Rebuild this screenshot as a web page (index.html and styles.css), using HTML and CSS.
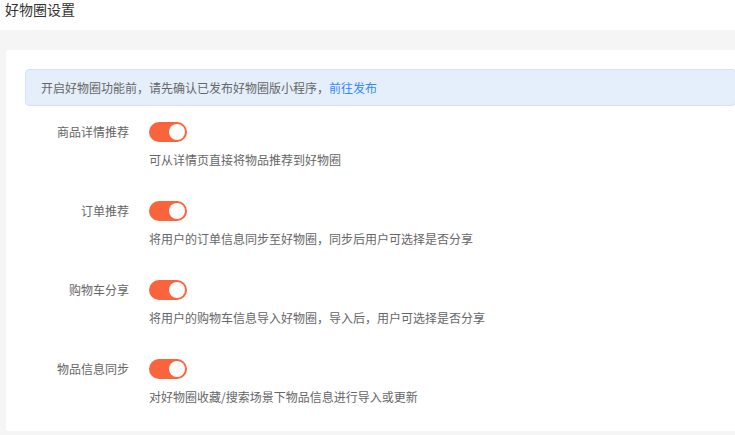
FILE: index.html
```html
<!DOCTYPE html>
<html lang="zh-CN">
  <head>
    <meta charset="UTF-8" />
    <meta name="viewport" content="width=device-width, initial-scale=1.0" />
    <title>好物圈设置</title>
    <link rel="stylesheet" href="styles.css">
  </head>
  <body>
    <h1 class="page-title">好物圈设置</h1>
    <div class="page-body">
      <div class="card">
        <div class="notice">
          开启好物圈功能前，请先确认已发布好物圈版小程序，<a href="#" class="notice-link">前往发布</a>
        </div>

        <div class="setting">
          <div class="setting-label">商品详情推荐</div>
          <div class="setting-control">
            <span class="switch switch-on"><span class="switch-knob"></span></span>
            <p class="setting-desc">可从详情页直接将物品推荐到好物圈</p>
          </div>
        </div>

        <div class="setting">
          <div class="setting-label">订单推荐</div>
          <div class="setting-control">
            <span class="switch switch-on"><span class="switch-knob"></span></span>
            <p class="setting-desc">将用户的订单信息同步至好物圈，同步后用户可选择是否分享</p>
          </div>
        </div>

        <div class="setting">
          <div class="setting-label">购物车分享</div>
          <div class="setting-control">
            <span class="switch switch-on"><span class="switch-knob"></span></span>
            <p class="setting-desc">将用户的购物车信息导入好物圈，导入后，用户可选择是否分享</p>
          </div>
        </div>

        <div class="setting">
          <div class="setting-label">物品信息同步</div>
          <div class="setting-control">
            <span class="switch switch-on"><span class="switch-knob"></span></span>
            <p class="setting-desc">对好物圈收藏/搜索场景下物品信息进行导入或更新</p>
          </div>
        </div>
      </div>
    </div>
  </body>
</html>
```

FILE: styles.css
```css
* {
  margin: 0;
  padding: 0;
  box-sizing: border-box;
}

body {
  font-family: "Noto Sans CJK SC", "Liberation Sans", sans-serif;
  font-size: 12px;
  color: #666;
  background-color: #f5f5f5;
  overflow: hidden;
}

/* header */
.page-title {
  height: 30px;
  padding: 2px 5px 0 5px;
  font-size: 14px;
  font-weight: normal;
  line-height: 14px;
  color: #333;
  background-color: #fff;
}

/* content */
.page-body {
  padding: 20px 0 0 6px;
}

.card {
  margin-right: -20px;
  padding: 19px 19px 25px 19px;
  background-color: #fff;
  border-radius: 2px;
}

.notice {
  height: 37px;
  padding: 0 15px;
  line-height: 35px;
  color: #666;
  background-color: #e5effb;
  border: 1px solid #d3e4f9;
  border-radius: 4px;
}

.notice-link {
  color: #38f;
  text-decoration: none;
}

.setting {
  display: grid;
  grid-template-columns: 104px 1fr;
  column-gap: 20px;
  margin-top: 32px;
}

.notice + .setting {
  margin-top: 16px;
}

.setting-label {
  height: 20px;
  line-height: 20px;
  text-align: right;
}

.switch {
  display: block;
  position: relative;
  width: 38px;
  height: 20px;
  border-radius: 10px;
  background-color: #ccc;
}

.switch-on {
  background-color: #fa643c;
}

.switch-knob {
  position: absolute;
  top: 2px;
  left: 2px;
  width: 16px;
  height: 16px;
  border-radius: 50%;
  background-color: #fff;
}

.switch-on .switch-knob {
  left: 20px;
}

.setting-desc {
  margin-top: 9px;
  line-height: 18px;
}
```
